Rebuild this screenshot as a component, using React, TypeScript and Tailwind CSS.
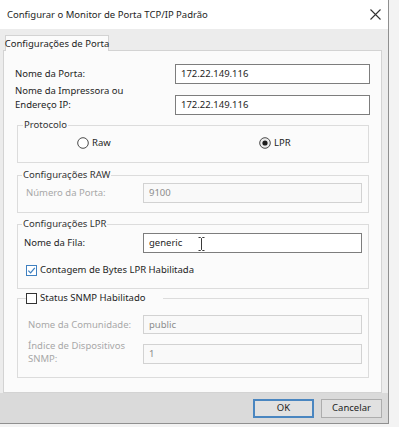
import React from 'react';

type BoxProps = {
  value: string;
  width: string;
  height?: string;
  disabled?: boolean;
  children?: React.ReactNode;
};

function TextBox({ value, width, height = 'h-[20px]', disabled, children }: BoxProps) {
  return (
    <div
      className={`relative shrink-0 ${width} ${height} flex items-center pl-[5px] border ${
        disabled ? 'border-[#d2d2d2] bg-[#f9f9f9] text-[#8c8c8c]' : 'border-[#7d7d7d] bg-white text-[#1e1e1e]'
      }`}
    >
      {value}
      {children}
    </div>
  );
}

function Radio({ checked, label }: { checked?: boolean; label: string }) {
  return (
    <div className="flex items-center gap-[3px]">
      <svg width="12" height="12" viewBox="0 0 12 12">
        <circle cx="6" cy="6" r="5.3" fill={checked ? '#ececec' : '#ffffff'} stroke="#4a4a4a" strokeWidth="1" />
        {checked && <circle cx="6" cy="6" r="2.6" fill="#1c1c1c" />}
      </svg>
      <span>{label}</span>
    </div>
  );
}

function CheckBox({ checked }: { checked?: boolean }) {
  return (
    <span
      className={`w-[11px] h-[11px] shrink-0 flex items-center justify-center border bg-white ${
        checked ? 'border-[#3f80c0]' : 'border-[#333333]'
      }`}
    >
      {checked && (
        <svg width="9" height="9" viewBox="0 0 9 9">
          <path d="M1.3 4.6 L3.6 6.9 L7.8 1.9" fill="none" stroke="#3f80c0" strokeWidth="1.3" />
        </svg>
      )}
    </span>
  );
}

function Button({ label, primary }: { label: string; primary?: boolean }) {
  return (
    <div
      className={`w-[61px] h-[19px] flex items-center justify-center bg-[#e1e1e1] ${
        primary ? 'border-2 border-[#4a86c0]' : 'border border-[#adadad]'
      }`}
    >
      {label}
    </div>
  );
}

export default function App() {
  return (
    <div className="w-[399px] h-[427px] bg-[#f3f3f3] font-['Noto_Sans',sans-serif] text-[9.5px] leading-[14px] text-[#1e1e1e]">
      <div className="w-[389px] h-[424px] flex flex-col border-r border-b border-[#8f8f8f] bg-[#e8e8e8]">
        {/* title bar */}
        <div className="h-[29px] shrink-0 bg-white flex items-center justify-between pl-[7px] pr-[7px]">
          <span className="text-[9.5px]">Configurar o Monitor de Porta TCP/IP Padrão</span>
          <svg width="11" height="11" viewBox="0 0 11 11">
            <path d="M0.5 0.5 L10.5 10.5 M10.5 0.5 L0.5 10.5" stroke="#333333" strokeWidth="1.1" />
          </svg>
        </div>

        <div className="flex-1 flex flex-col pl-[3px] pr-[6px] bg-[#ececec]">
          <div className="pt-[6px] flex">
            <div className="relative z-10 -mb-px ml-[2px] h-[16px] w-[104px] whitespace-nowrap flex items-center justify-center border border-b-0 border-[#d3d3d3] bg-[#fbfbfb]">
              Configurações de Porta
            </div>
          </div>

          <div className="h-[343px] shrink-0 border border-[#d3d3d3] bg-[#fbfbfb] flex flex-col">
            {/* Nome da Porta */}
            <div className="mt-[13px] flex items-center pl-[11px]">
              <span className="w-[160px]">Nome da Porta:</span>
              <TextBox value="172.22.149.116" width="w-[195px]" />
            </div>

            {/* Impressora */}
            <div className="flex items-start pl-[11px]">
              <span className="w-[160px]">
                Nome da Impressora ou
                <br />
                Endereço IP:
              </span>
              <div className="mt-[11px]">
                <TextBox value="172.22.149.116" width="w-[195px]" />
              </div>
            </div>

            {/* Protocolo */}
            <fieldset className="mt-[3px] ml-[13px] w-[352px] border border-[#dcdcdc] pt-[4px] pb-[12px]">
              <legend className="ml-[5px] px-[1px] text-[#333333]">Protocolo</legend>
              <div className="flex items-center h-[14px]">
                <div className="ml-[59px] w-[182px]">
                  <Radio label="Raw" />
                </div>
                <Radio checked label="LPR" />
              </div>
            </fieldset>

            {/* RAW */}
            <fieldset className="mt-[5px] ml-[13px] w-[352px] border border-[#dcdcdc] pt-[1px] pb-[9px] pl-[8px]">
              <legend className="ml-[-4px] px-[1px] text-[#333333]">Configurações RAW</legend>
              <div className="flex items-center">
                <span className="w-[117px] text-[#a8a8a8]">Número da Porta:</span>
                <TextBox value="9100" width="w-[219px]" disabled />
              </div>
            </fieldset>

            {/* LPR */}
            <fieldset className="mt-[4px] ml-[13px] w-[352px] border border-[#dcdcdc] pt-[2px] pb-[11px] pl-[6px]">
              <legend className="ml-[-2px] px-[1px] text-[#333333]">Configurações LPR</legend>
              <div className="flex items-center">
                <span className="w-[119px]">Nome da Fila:</span>
                <TextBox value="generic" width="w-[219px]">
                  <svg className="absolute left-[54px] top-[3px]" width="7" height="14" viewBox="0 0 7 14">
                    <path d="M0.5 0.5 H2.5 L3.5 1.5 L4.5 0.5 H6.5 M3.5 1.5 V12.5 M0.5 13.5 H2.5 L3.5 12.5 L4.5 13.5 H6.5" fill="none" stroke="#3a3a3a" strokeWidth="1" />
                  </svg>
                </TextBox>
              </div>
              <div className="mt-[10px] h-[14px] flex items-center gap-[3px] ml-[2px]">
                <CheckBox checked />
                <span>Contagem de Bytes LPR Habilitada</span>
              </div>
            </fieldset>

            {/* SNMP */}
            <fieldset className="mt-[2px] ml-[13px] w-[352px] border border-[#dcdcdc] pt-[10px] pb-[12px] pl-[10px]">
              <legend className="ml-[-2px] pr-[18px] flex items-center gap-[3px]">
                <CheckBox />
                <span>Status SNMP Habilitado</span>
              </legend>
              <div className="flex items-center">
                <span className="w-[115px] text-[#a8a8a8]">Nome da Comunidade:</span>
                <TextBox value="public" width="w-[219px]" height="h-[19px]" disabled />
              </div>
              <div className="mt-[6px] flex items-start">
                <span className="w-[115px] leading-[12.5px] text-[#a8a8a8]">
                  Índice de Dispositivos
                  <br />
                  SNMP:
                </span>
                <div className="mt-[4px]">
                  <TextBox value="1" width="w-[219px]" disabled />
                </div>
              </div>
            </fieldset>
          </div>

          <div className="flex-1 flex items-center justify-end gap-[7px] bg-[#dadada] -ml-[3px] -mr-[6px] pr-[6px]">
            <Button label="OK" primary />
            <Button label="Cancelar" />
          </div>
        </div>
      </div>
    </div>
  );
}
